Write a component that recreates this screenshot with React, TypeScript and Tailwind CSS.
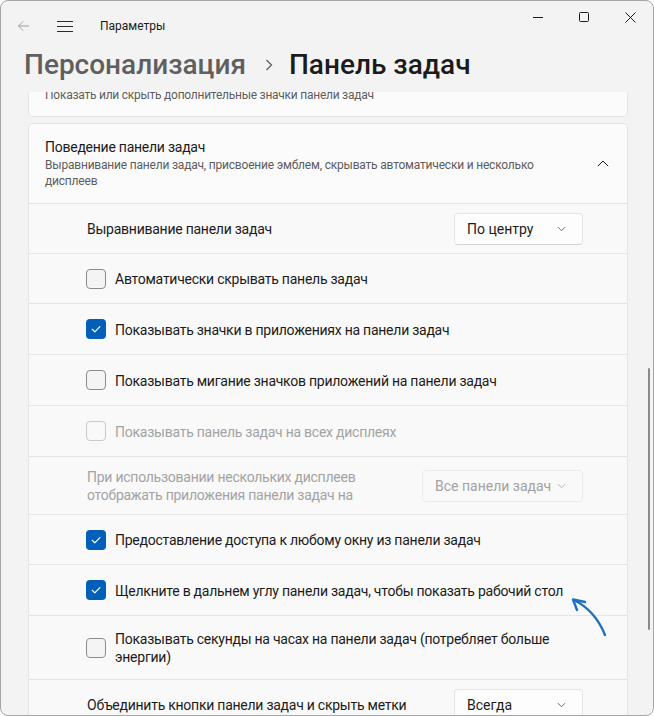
import React from "react";

function Check({ checked, disabled }: { checked?: boolean; disabled?: boolean }) {
  if (checked) {
    return (
      <span className="flex h-5 w-5 shrink-0 items-center justify-center rounded-[4px] bg-[#005fb8]">
        <svg width="12" height="12" viewBox="0 0 12 12">
          <path d="M2.2 6.3 L4.8 8.8 L9.9 3.6" stroke="white" strokeWidth="1.2" fill="none" strokeLinecap="round" strokeLinejoin="round" />
        </svg>
      </span>
    );
  }
  return (
    <span
      className={
        disabled
          ? "h-5 w-5 shrink-0 rounded-[4px] border border-[#c9c9c9] bg-[#f9f9f9]"
          : "h-5 w-5 shrink-0 rounded-[4px] border border-[#8b8b8b] bg-[#f4f4f4]"
      }
    />
  );
}

function Chevron({ color = "#5f5f5f" }: { color?: string }) {
  return (
    <svg width="9" height="6" viewBox="0 0 9 6" className="shrink-0">
      <path d="M1 1.2 L4.5 4.7 L8 1.2" stroke={color} strokeWidth="1" fill="none" />
    </svg>
  );
}

function Dropdown({ label, width, disabled }: { label: string; width: string; disabled?: boolean }) {
  return (
    <div
      className={
        disabled
          ? `flex h-8 ${width} items-center justify-between rounded-[4px] border border-[#ebebeb] bg-[#f9f9f9] pl-3 pr-4 text-[14px] text-[#a3a3a3]`
          : `flex h-8 ${width} items-center justify-between rounded-[4px] border border-[#e5e5e5] border-b-[#d4d4d4] bg-[#fdfdfd] pl-3 pr-4 text-[14px] text-[#1b1b1b]`
      }
    >
      <span className="pt-px">{label}</span>
      <Chevron color={disabled ? "#b5b5b5" : "#6a6a6a"} />
    </div>
  );
}

function CheckRow({
  h,
  checked,
  disabled,
  children,
}: {
  h: string;
  checked?: boolean;
  disabled?: boolean;
  children: React.ReactNode;
}) {
  return (
    <div className={`flex ${h} items-center gap-[9px] border-t border-[#e5e5e5] bg-[#f9f9f9] pl-[57px] pr-11`}>
      <Check checked={checked} disabled={disabled} />
      <span
        className={
          disabled
            ? "pt-px text-[14px] leading-[18px] tracking-[-0.25px] text-[#a3a3a3]"
            : "pt-px text-[14px] leading-[18px] tracking-[-0.25px] text-[#1b1b1b]"
        }
      >
        {children}
      </span>
    </div>
  );
}

export default function App() {
  return (
    <div className="h-[716px] w-[654px] bg-white">
      <div className="relative flex h-[716px] w-[654px] flex-col overflow-hidden rounded-lg border border-[#a6a6a6] bg-[#f3f3f3] font-['Roboto',sans-serif] text-[#1b1b1b]">
        {/* Title bar */}
        <div className="flex h-[46px] shrink-0 items-start">
          <div className="flex h-[46px] items-center pt-[4px]">
            <svg className="ml-[16px]" width="13" height="12" viewBox="0 0 13 12">
              <path d="M12 6 H1.5 M6 1.5 L1.5 6 L6 10.5" stroke="#9d9d9d" strokeWidth="1" fill="none" />
            </svg>
            <svg className="ml-[27px]" width="16" height="12" viewBox="0 0 16 12">
              <path d="M0 1.5 H16 M0 6.5 H16 M0 11.5 H16" stroke="#2b2b2b" strokeWidth="1" fill="none" />
            </svg>
            <span className="ml-[27px] text-[12px] text-[#1b1b1b]">Параметры</span>
          </div>
          <div className="ml-auto flex h-8">
            <div className="flex w-[46px] items-center justify-center">
              <svg width="10" height="10" viewBox="0 0 10 10">
                <path d="M0 5.5 H10" stroke="#1b1b1b" strokeWidth="1" />
              </svg>
            </div>
            <div className="flex w-[46px] items-center justify-center">
              <svg width="10" height="10" viewBox="0 0 10 10">
                <rect x="0.5" y="0.5" width="9" height="9" rx="1" stroke="#1b1b1b" strokeWidth="1" fill="none" />
              </svg>
            </div>
            <div className="flex w-[46px] items-center justify-center">
              <svg width="11" height="11" viewBox="0 0 11 11">
                <path d="M0.5 0.5 L10.5 10.5 M10.5 0.5 L0.5 10.5" stroke="#1b1b1b" strokeWidth="1" />
              </svg>
            </div>
          </div>
        </div>

        {/* Header */}
        <div className="flex h-[45px] shrink-0 items-start pl-[23px]">
          <div className="-mt-px flex items-center text-[28px] font-medium leading-[38px]">
            <span className="text-[#5f5f5f]">Персонализация</span>
            <svg className="ml-[19px] mr-[16px]" width="8" height="12" viewBox="0 0 8 12">
              <path d="M1.5 1 L6.5 6 L1.5 11" stroke="#5f5f5f" strokeWidth="1.3" fill="none" />
            </svg>
            <span className="text-[#1b1b1b]">Панель задач</span>
          </div>
        </div>

        {/* Content */}
        <div className="relative min-h-0 flex-1 overflow-hidden">
          <div className="-mt-[39px] flex flex-col gap-[6px] pl-[27px] pr-[25px]">
            <div className="rounded-[4px] border border-[#e5e5e5] bg-[#fbfbfb] px-4 pb-[13px] pt-[13px]">
              <div className="text-[14px] leading-5 tracking-[-0.25px]">Значки угла панели задач</div>
              <div className="whitespace-nowrap text-[12px] leading-4 tracking-[-0.25px] text-[#5d5d5d]">
                Показать или скрыть дополнительные значки панели задач
              </div>
            </div>

            <div className="overflow-hidden rounded-[4px] border border-[#e5e5e5] bg-[#fbfbfb]">
              <div className="flex items-center pb-[14px] pl-4 pr-[18px] pt-[13px]">
                <div className="flex-1">
                  <div className="text-[14px] leading-5 tracking-[-0.25px]">Поведение панели задач</div>
                  <div className="whitespace-nowrap text-[12px] leading-4 tracking-[-0.2px] text-[#5d5d5d]">
                    Выравнивание панели задач, присвоение эмблем, скрывать автоматически и несколько
                    <br />
                    дисплеев
                  </div>
                </div>
                <svg width="12" height="7" viewBox="0 0 12 7">
                  <path d="M0.8 6.2 L6 1 L11.2 6.2" stroke="#1b1b1b" strokeWidth="1" fill="none" />
                </svg>
              </div>

              <div className="flex h-[50px] items-center justify-between border-t border-[#e5e5e5] bg-[#f9f9f9] pl-[58px] pr-11">
                <span className="pt-[2px] text-[14px] tracking-[-0.25px]">Выравнивание панели задач</span>
                <Dropdown label="По центру" width="w-[129px]" />
              </div>
              <CheckRow h="h-[50px]">Автоматически скрывать панель задач</CheckRow>
              <CheckRow h="h-[51px]" checked>
                Показывать значки в приложениях на панели задач
              </CheckRow>
              <CheckRow h="h-[51px]">Показывать мигание значков приложений на панели задач</CheckRow>
              <CheckRow h="h-[51px]" disabled>
                Показывать панель задач на всех дисплеях
              </CheckRow>
              <div className="flex h-[58px] items-center justify-between border-t border-[#e5e5e5] bg-[#f9f9f9] pl-[58px] pr-11">
                <span className="whitespace-nowrap pt-px text-[14px] leading-[18px] tracking-[-0.25px] text-[#a3a3a3]">
                  При использовании нескольких дисплеев
                  <br />
                  отображать приложения панели задач на
                </span>
                <Dropdown label="Все панели задач" width="w-[161px]" disabled />
              </div>
              <CheckRow h="h-[50px]" checked>
                Предоставление доступа к любому окну из панели задач
              </CheckRow>
              <CheckRow h="h-[51px]" checked>
                <span className="whitespace-nowrap">Щелкните в дальнем углу панели задач, чтобы показать рабочий стол</span>
              </CheckRow>
              <CheckRow h="h-[64px]">
                <span className="whitespace-nowrap">
                  Показывать секунды на часах на панели задач (потребляет больше
                  <br />
                  энергии)
                </span>
              </CheckRow>
              <div className="flex h-[50px] items-center justify-between border-t border-[#e5e5e5] bg-[#f9f9f9] pl-[58px] pr-11">
                <span className="pt-[2px] text-[14px] tracking-[-0.25px]">Объединить кнопки панели задач и скрыть метки</span>
                <Dropdown label="Всегда" width="w-[129px]" />
              </div>
            </div>
          </div>

          {/* scrollbar */}
          <div className="absolute right-[3px] top-[276px] h-[262px] w-[2px] rounded-full bg-[#8a8a8a]" />
        </div>

        {/* annotation arrow */}
        <svg className="pointer-events-none absolute left-0 top-0" width="654" height="716" viewBox="-1 -1 654 716">
          <path d="M603 633 C597 618 588 606 572 598" stroke="#1f6fc4" strokeWidth="2.4" fill="none" strokeLinecap="round" />
          <path d="M583 600 L571 597.5 L575 608" stroke="#1f6fc4" strokeWidth="2.4" fill="none" strokeLinecap="round" strokeLinejoin="round" />
        </svg>
      </div>
    </div>
  );
}
